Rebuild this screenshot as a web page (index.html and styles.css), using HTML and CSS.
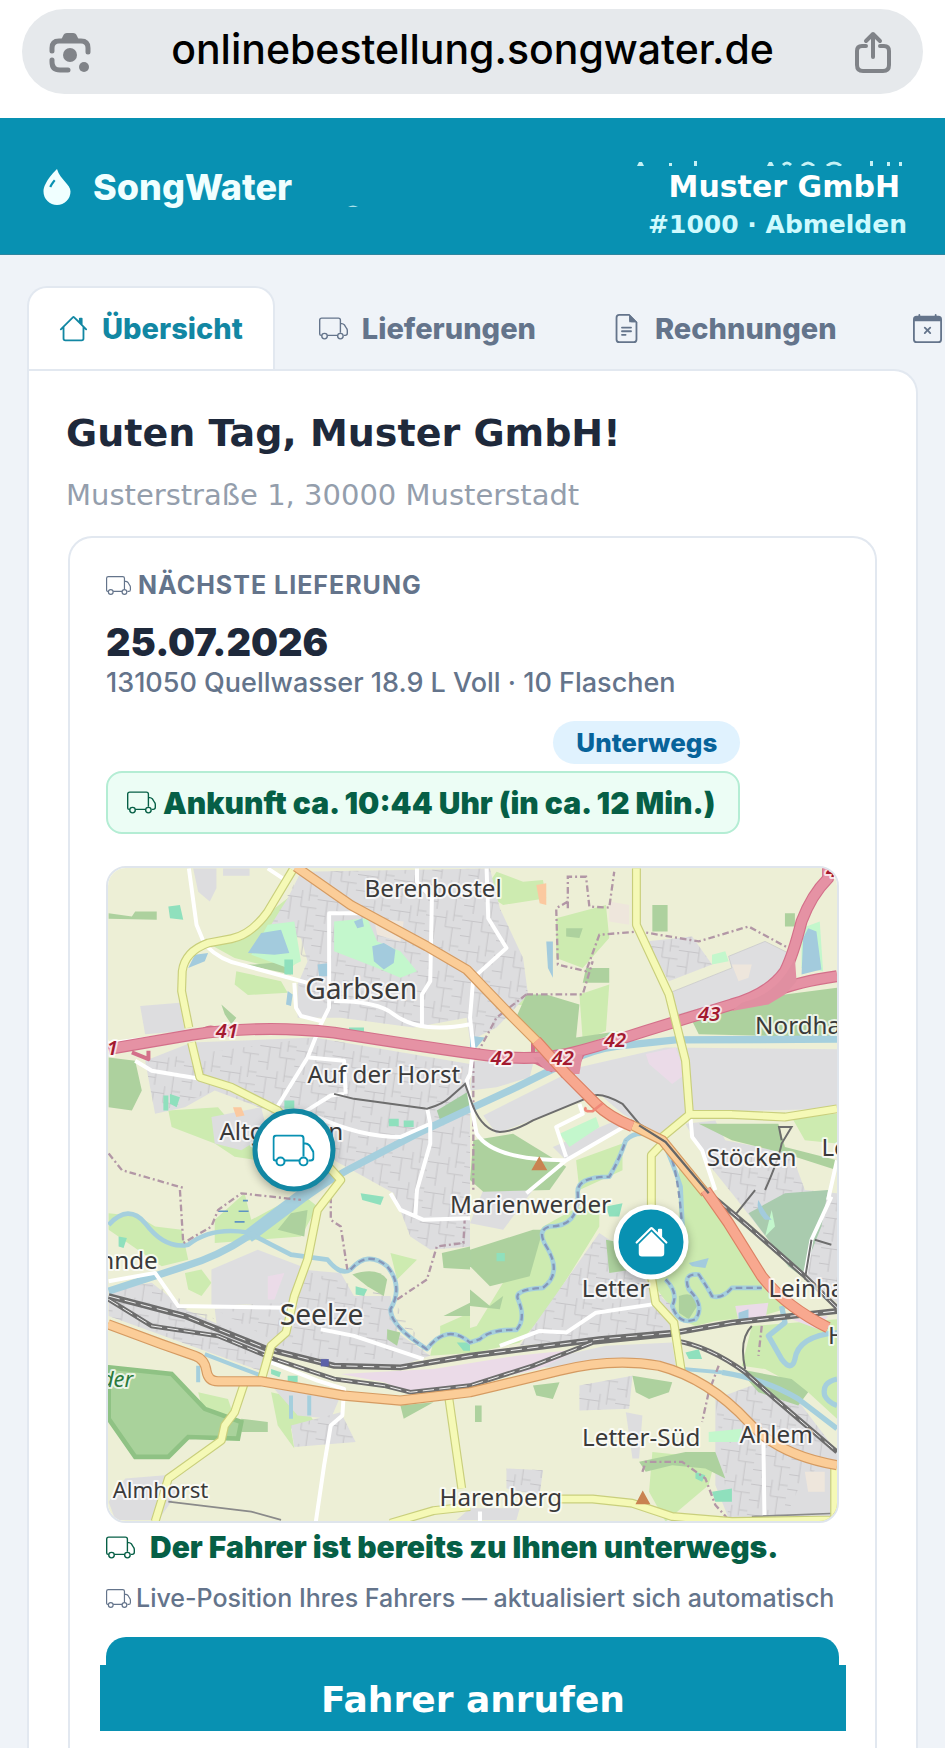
FILE: index.html
```html
<!DOCTYPE html>
<html lang="de">

<head>
    <meta charset="UTF-8">
    <meta name="viewport" content="width=device-width, initial-scale=1">
    <title>SongWater Kundenportal</title>
    <link rel="stylesheet" href="styles.css">
</head>

<body>

    <!-- Shared icon shapes -->
    <svg class="sprite" aria-hidden="true">
        <symbol id="truck" viewBox="0 0 42 32">
            <g fill="none" stroke="currentColor" stroke-width="2" stroke-linejoin="round">
                <path d="M4 26H3a2 2 0 0 1-2-2V4a3 3 0 0 1 3-3h24a3 3 0 0 1 3 3v18M12 26h15" />
                <path d="M31 9h2c2 0 3 1 4 2l3 5c1 1 1 2 1 3v4a3 3 0 0 1-3 3h-2" />
                <circle cx="8" cy="27" r="4" />
                <circle cx="31" cy="27" r="4" />
            </g>
        </symbol>
        <symbol id="house" viewBox="0 0 16 16">
            <path fill="currentColor" d="M8.707 1.5a1 1 0 0 0-1.414 0L.646 8.146a.5.5 0 0 0 .708.708L2 8.207V13.5A1.5 1.5 0 0 0 3.5 15h9a1.5 1.5 0 0 0 1.5-1.5V8.207l.646.647a.5.5 0 0 0 .708-.708L13 5.793V2.5a.5.5 0 0 0-.5-.5h-1a.5.5 0 0 0-.5.5v1.293zM13 7.207V13.5a.5.5 0 0 1-.5.5h-9a.5.5 0 0 1-.5-.5V7.207l5-5z" />
        </symbol>
    </svg>

    <!-- Address bar -->
    <div class="browser-bar">
        <div class="address">
            <button class="bar-btn" type="button" aria-label="Bildsuche">
                <svg viewBox="0 0 42 42" width="42" height="42">
                    <g fill="none" stroke="#808388" stroke-width="5" stroke-linecap="round">
                        <path d="M3 20v-3q0-7 7-7h22q7 0 7 7v4" />
                        <path d="M3 29v2q0 8 8 8h8" />
                    </g>
                    <path fill="#808388" d="M11 11l3-6q1-3 4-3h6q3 0 4 3l3 6z" />
                    <circle cx="21" cy="24" r="7" fill="#808388" />
                    <circle cx="35" cy="36" r="5" fill="#808388" />
                </svg>
            </button>
            <input class="url" type="text" value="onlinebestellung.songwater.de" aria-label="Adresse" readonly>
            <button class="bar-btn" type="button" aria-label="Teilen">
                <svg viewBox="0 0 42 42" width="42" height="42">
                    <g fill="none" stroke="#808388" stroke-width="4" stroke-linecap="round" stroke-linejoin="round">
                        <path d="M12 15H8q-5 0-5 5v14q0 6 6 6h20q6 0 6-6V20q0-5-5-5h-4" />
                        <path d="M19 26V3M12 10l7-7 7 7" />
                    </g>
                </svg>
            </button>
        </div>
    </div>

    <!-- Header -->
    <header class="header">
        <div class="brand">
            <svg viewBox="0 0 16 16" width="36" height="36">
                <path fill="#f0ffff" fill-rule="evenodd" d="M8 16a6 6 0 0 0 6-6c0-1.655-1.122-2.904-2.432-4.362C10.254 4.176 8.75 2.503 8 0c0 0-6 5.686-6 10a6 6 0 0 0 6 6M6.646 4.646l.708.708c-.29.29-1.128 1.311-1.907 2.87l-.894-.448c.82-1.641 1.717-2.753 2.093-3.13" />
            </svg>
            <span>SongWater</span>
            <svg class="brand-mark" viewBox="0 0 10 2" width="10" height="2">
                <path d="M0 2q5-3 10 0z" fill="#a8e2ea" />
            </svg>
        </div>
        <div class="account">
            <svg class="account-marks" viewBox="0 0 272 5" width="272" height="5">
                <path fill="#c5f1f5" d="M2 5l2-4h3l2 4zM34 2h3v3h-3zM59 0h3v5h-3zM132 5l2-4h3l2 4zM235 0h3v5h-3zM252 1h3v4h-3zM264 1h3v4h-3z" />
                <path fill="none" stroke="#c5f1f5" stroke-width="3" d="M148 4q4-4 8 0M167 5q6-6 12 0M192 5q7-6 14 0" />
            </svg>
            <span class="account-name">Muster GmbH</span>
            <span class="account-sub">#1000 · <a href="#abmelden">Abmelden</a></span>
        </div>
    </header>

    <main class="page">
        <!-- Tabs -->
        <nav class="tabs">
            <a class="tab active" href="#uebersicht">
                <svg class="icon"><use href="#house" /></svg>
                Übersicht
            </a>
            <a class="tab" href="#lieferungen">
                <svg class="icon"><use href="#truck" /></svg>
                Lieferungen
            </a>
            <a class="tab" href="#rechnungen">
                <svg class="icon" viewBox="0 0 16 16" fill="currentColor">
                    <path d="M5.500 7a.5.5 0 0 0 0 1h5a.5.5 0 0 0 0-1zM5 9.500a.5.5 0 0 1 .5-.5h5a.5.5 0 0 1 0 1h-5a.5.5 0 0 1-.5-.5m0 2a.5.5 0 0 1 .5-.5h2a.5.5 0 0 1 0 1h-2a.5.5 0 0 1-.5-.5" />
                    <path d="M9.500 0H4a2 2 0 0 0-2 2v12a2 2 0 0 0 2 2h8a2 2 0 0 0 2-2V4.500zm0 1v2A1.500 1.500 0 0 0 11 4.500h2V14a1 1 0 0 1-1 1H4a1 1 0 0 1-1-1V2a1 1 0 0 1 1-1z" />
                    <path d="M9.500 0v4.500H14z" />
                </svg>
                Rechnungen
            </a>
            <a class="tab" href="#pausen" aria-label="Lieferpausen">
                <svg class="icon" viewBox="0 0 16 16" fill="currentColor">
                    <path d="M4 .5a.5.5 0 0 0-1 0V1H2a2 2 0 0 0-2 2v11a2 2 0 0 0 2 2h12a2 2 0 0 0 2-2V3a2 2 0 0 0-2-2h-1V.5a.5.5 0 0 0-1 0V1H4zM1 14V4h14v10a1 1 0 0 1-1 1H2a1 1 0 0 1-1-1" />
                    <path d="M6.146 7.146a.5.5 0 0 1 .708 0L8 8.293l1.146-1.147a.5.5 0 1 1 .708.708L8.707 9l1.147 1.146a.5.5 0 0 1-.708.708L8 9.707l-1.146 1.147a.5.5 0 0 1-.708-.708L7.293 9 6.146 7.854a.5.5 0 0 1 0-.708" />
                </svg>
            </a>
        </nav>

        <section class="panel">
            <h1>Guten Tag, Muster GmbH!</h1>
            <p class="street">Musterstraße 1, 30000 Musterstadt</p>

            <div class="card">
                <h2 class="card-label">
                    <svg class="icon small"><use href="#truck" /></svg>
                    NÄCHSTE LIEFERUNG
                </h2>
                <div class="date">25.07.2026</div>
                <div class="product">131050 Quellwasser 18.9 L Voll · 10 Flaschen</div>

                <div class="status">
                    <span class="badge">Unterwegs</span>
                    <div class="eta">
                        <svg class="icon"><use href="#truck" /></svg>
                        Ankunft ca. 10:44 Uhr (in ca. 12 Min.)
                    </div>
                </div>

                <!-- Live map -->
                <div class="map">
                    <svg class="map-svg" viewBox="18 18 2199 1971" preserveAspectRatio="xMidYMid slice" role="img" aria-label="Karte">
                        <defs>
                            <pattern id="streets" width="110" height="92" patternUnits="userSpaceOnUse" patternTransform="rotate(8)">
                                <path d="M0 22H62M62 0V50M30 22V92M62 50H110M84 50V92M0 70H30M84 12H110M84 0V30" fill="none" stroke="#c6c5c8" stroke-width="3" />
                            </pattern>
                        </defs>
                        <rect x="0" y="0" width="2240" height="2010" fill="#edefd6" />

                        <!-- meadows -->
                        <g fill="#cdebb0">
                            <path d="M310 240L430 210 560 110 620 60 560 190 590 300 560 330 400 290z" />
                            <path d="M405 330L540 360 560 395 440 402 400 370z" />
                            <path d="M200 750L350 740 400 800 500 850 470 900 400 890 340 850 210 800z" />
                            <path d="M340 1080L430 1000 450 1080 600 1000 650 1040 600 1130 340 1150z" />
                            <path d="M20 1060L110 1070 160 1100 240 1110 260 1200 180 1220 20 1110z" />
                            <path d="M250 1240L300 1230 330 1270 300 1310 260 1290z" />
                            <path d="M1190 30L1270 60 1330 55 1340 110 1210 130 1150 90zM1370 170L1520 130 1530 230 1450 320 1370 290z" />
                            <path d="M1440 400L1530 370 1520 510 1450 540z" />
                            <path d="M1430 900L1570 850 1570 930 1440 990z" />
                            <path d="M1000 1440L1130 1400 1240 1220 1330 1100 1420 1050 1500 1020 1500 1100 1420 1230 1330 1370 1260 1450 1130 1480 990 1490z" />
                            <path d="M1740 880L1830 1010 1960 1200 2010 1270 2090 1340 1990 1370 1850 1385 1790 1400 1740 1380 1660 1270 1740 1200z" />
                            <path d="M1960 1400L2217 1380 2217 1680 2130 1600 2000 1530 1930 1520z" />
                            <path d="M1820 1400L1930 1390 1930 1500 1850 1480z" fill="#edefd6" />
                            <path d="M870 1180L950 1200 890 1260zM1020 1400L1110 1360 1110 1460 1020 1440z" />
                            <path d="M510 1600L600 1620 640 1690 570 1710 580 1770 530 1700z" />
                            <path d="M290 1600L380 1620 400 1680 300 1640z" />
                            <path d="M1230 400L1360 410 1330 440 1250 430zM2080 770L2217 760 2217 850 2120 840z" />
                            <path d="M1660 1780L1850 1800 1830 1880 1700 1990 1650 1900z" />
                        </g>

                        <!-- built-up areas -->
                        <g fill="#dddddf">
                            <path d="M275 20H345V80L325 120 290 90zM365 20H445V42H365z" />
                            <path d="M115 435L235 425 250 510 130 520z" />
                            <path d="M600 30L1170 20 1200 140 1270 290 1285 400 1190 500 1110 540 1100 470 940 500 720 470 590 470 590 370 620 300 600 230 510 190 560 110z" />
                            <path d="M130 600L270 545 640 530 1110 610 1110 1160 990 1170 930 1130 880 1000 700 900 500 750 340 690 250 740 160 760z" />
                            <path d="M330 770L480 740 500 820 420 870 340 850z" />
                            <path d="M1640 240L1780 225 1840 310 1710 360z" />
                            <path d="M1120 600L1300 610 1290 650 1190 680 1110 690z" />
                            <path d="M1760 790L1850 780 1880 840 2080 880 2120 990 2217 1000 2217 1330 2140 1270 2010 1140 1900 1000 1820 900z" />
                            <path d="M1360 860L1550 780 1570 800 1400 900z" />
                            <path d="M1150 990H1300L1210 1110 1110 1090z" />
                            <path d="M1260 1460L1380 1290 1500 1120 1560 1160 1660 1290 1730 1350 1730 1420z" />
                            <path d="M20 1290L150 1270 250 1350 340 1390 500 1470 490 1540 20 1370z" />
                            <path d="M340 1350L560 1320 600 1230 720 1240 760 1310 870 1310 890 1420 990 1490 900 1520 640 1510 350 1430z" />
                            <path d="M20 1930L70 1860 190 1850 230 1900 170 1985 40 1985z" />
                            <path d="M570 1700L720 1660 765 1750 580 1765zM520 1590L720 1610 690 1680 590 1670z" />
                            <path d="M1440 1580L1600 1550 1590 1650 1440 1655zM1580 1660L1630 1670 1620 1800 1600 1800z" />
                            <path d="M1850 1620L1960 1580 2080 1600 2217 1780 2217 1980 1890 1980 1850 1880z" />
                            <path d="M1220 1830L1330 1835 1320 1910 1220 1890zM1110 1950L1260 1950 1250 1985 1070 1985z" />
                        </g>
                        <g fill="url(#streets)">
                            <path d="M600 30L1170 20 1200 140 1270 290 1285 400 1190 500 1110 540 1100 470 940 500 720 470 590 370 620 300 510 190z" />
                            <path d="M130 600L640 530 1110 610 1110 1160 990 1170 930 1130 880 1000 700 900 500 750 340 690 160 760z" />
                            <path d="M1640 240L1780 225 1840 310 1710 360zM1820 900L2080 880 2120 990 2217 1000 2217 1330 1900 1000z" />
                            <path d="M1260 1460L1500 1120 1730 1350 1730 1420zM340 1350L600 1230 870 1310 990 1490 640 1510zM20 1290L150 1270 500 1470 490 1540 20 1370z" />
                            <path d="M1850 1620L1960 1580 2080 1600 2217 1780 2110 1870 2060 1980H1890zM570 1700L720 1660 765 1750 580 1765z" />
                            <path d="M1440 1580L1600 1550 1590 1650 1440 1655zM1220 1830L1330 1835 1320 1910 1220 1890z" />
                        </g>
                        <g fill="#dedee0">
                            <path d="M1700 400L1900 320 1890 285 2000 240 2080 280 2050 340 1960 400 1740 460z" stroke="#c4c4c8" stroke-width="2" />
                            <path d="M1150 765L1440 620 1700 560 2217 565V745L1770 755 1690 830 1570 760 1500 700 1190 820z" />
                            <path d="M330 1230L470 1170 600 1220 560 1330 330 1340z" />
                            <path d="M1250 1520L1520 1460 1720 1450 1730 1520 1600 1510 1430 1530z" />
                        </g>
                        <path d="M1640 580L1730 560 1760 640 1720 670 1650 610zM500 1250L550 1240 520 1320H500zM1910 1340L2010 1330 2000 1385 1920 1385zM2080 1380L2190 1370 2160 1410z" fill="#ebdbe8" />
                        <path d="M720 1545L1000 1530 1250 1490 1440 1470 1320 1530 1110 1575 930 1600 850 1570z" fill="#ebdbe8" />
                        <path d="M820 170L910 180 900 240 830 220zM1530 120L1590 130 1590 190 1530 180zM1300 465L1350 460 1400 500 1390 540 1330 530zM1900 310L1960 310 1950 350 1920 360zM2120 1840H2180V1900H2130z" fill="#eee6dc" />

                        <!-- woods -->
                        <g fill="#add19e">
                            <path d="M20 590L100 600 120 690 90 750 20 740zM20 155L90 165 100 150 165 150 165 175 20 172z" />
                            <path d="M460 310L560 300 570 340 430 310zM360 430L405 470 390 490 370 460z" />
                            <path d="M1280 400L1340 400 1440 430 1430 530 1560 510 1440 560 1360 585 1300 570 1300 510 1240 490z" />
                            <path d="M1460 320L1530 320V365H1450zM2060 155H2090V195H2060zM1400 200L1450 200 1440 230 1400 225z" />
                            <path d="M1660 130H1706V210H1660z" />
                            <path d="M1780 480L2060 400 2217 380V530L1800 520z" />
                            <path d="M1120 840L1240 820 1370 900 1400 920 1350 990 1150 995 1110 960z" />
                            <path d="M1290 1250L1170 1280 1110 1220 1110 1170 1300 1110 1330 1110z" />
                            <path d="M1800 790L2040 790 2060 860 2217 900 2217 930 2060 880 1900 840z" />
                            <path d="M1950 1060L2060 1000 2190 990 2170 1100 2110 1250 2070 1220z" fill="#a9cbae" />
                            <path d="M1010 750L1110 690 1110 740 1020 780z" fill="#a2cba0" />
                            <path d="M570 1060L620 1050 610 1130 530 1110zM1025 1180L1110 1160V1230L1030 1225zM1030 1370L1110 1330V1370z" />
                            <path d="M755 1245Q830 1220 860 1260L850 1310 800 1280z" />
                            <path d="M1740 1310Q1790 1290 1795 1340L1770 1380 1740 1360z" />
                            <path d="M1300 1580L1380 1570 1360 1620 1310 1610zM1600 1550L1720 1570 1710 1600 1650 1620 1610 1600zM1125 1640H1145V1690H1125z" />
                            <path d="M1520 1140L1570 1150 1600 1230 1530 1240zM860 1410L900 1420 890 1460 860 1440z" />
                            <path d="M420 1680L500 1690 500 1720 420 1720zM900 1640L1000 1630 910 1680zM1620 1810L1760 1780 1850 1780 1880 1860 1820 1830 1720 1820 1640 1840z" />
                            <path d="M1110 1290L1170 1340 1210 1310 1200 1350 1110 1340zM1920 1530L2080 1560 2130 1600 2100 1640 1980 1600z" />
                        </g>
                        <path d="M20 1525L210 1545 310 1650 420 1690 410 1740 260 1735 200 1795 100 1795 20 1680z" fill="#a9d29b" stroke="#8fc284" stroke-width="14" />

                        <!-- parks and pitches -->
                        <g fill="#c3f7cc">
                            <path d="M500 190L580 180 600 300 560 320 450 280z" />
                            <path d="M700 180L800 170 830 240 900 270 950 330 900 350 830 320 700 270z" />
                            <path d="M1380 820L1490 770 1500 800 1410 860zM1840 280L1880 270 1890 300 1840 310zM1830 1720L1930 1710 1920 1750 1830 1750z" />
                            <path d="M2110 200L2165 180 2175 330 2110 320z" />
                            <path d="M2000 1130L2030 1100 2020 1050z" />
                        </g>
                        <g fill="#8fe0bd">
                            <path d="M200 135L235 130 245 175 205 170zM550 295H576V340H550zM185 705H200V750H185zM205 700L235 710 225 740 205 730zM550 720H580V745H550zM865 775H895V798H865zM910 780H940V800H910zM745 500H790V515H745z" />
                            <path d="M780 1000L850 1010 840 1035 785 1020zM50 1130L75 1135 65 1165 50 1160zM765 1280L800 1290 790 1310 765 1305zM510 1530L540 1540 535 1555 510 1545zM560 1550H590V1570H560z" />
                            <path d="M1520 1040L1570 1030 1560 1070 1530 1070zM1190 1180H1215V1205H1190zM1760 1480L1800 1470 1810 1500 1770 1500zM1840 1900L1900 1890V1930L1850 1930zM1790 1840L1820 1850 1810 1870 1790 1860zM1070 1450L1110 1450V1475H1090z" />
                        </g>
                        <g fill="#fbc9a0">
                            <path d="M395 740L420 740 430 765 405 770zM1310 70L1340 65V130L1320 125z" />
                        </g>

                        <!-- lakes -->
                        <g fill="#a3cbdd">
                            <path d="M440 275L480 215 540 205 565 275 520 280zM815 255L850 245 885 265 880 305 850 325 820 300zM650 310L685 305 685 345 655 345zM260 320L280 280 320 275 310 300z" />
                            <path d="M2115 230L2130 200 2155 210 2170 325 2110 340zM560 390L575 400 570 435 555 430zM760 180L785 170 790 195 770 200zM1340 240H1360V350L1345 320zM1110 525L1155 530 1130 560 1110 560z" />
                            <path d="M1980 1020Q2000 1060 2020 1080L2000 1080Q1970 1050 1980 1020zM1770 1210L1830 1195 1820 1225 1780 1220zM1920 1360L1950 1350V1380H1920z" />
                        </g>

                        <!-- rivers and canal -->
                        <g fill="none" stroke="#a5cfdd" stroke-linejoin="round">
                            <path stroke-width="22" d="M20 1295L250 1220Q350 1190 440 1130L600 1010 740 930 950 820 1110 745 1250 680 1400 605Q1480 565 1560 555L1730 537 2217 535" />
                            <path stroke-width="40" d="M440 1130L600 1010 700 940" />
                            <path stroke-width="12" d="M310 1485L400 1520 480 1550M1640 1520L1870 1540M570 1610V1680M625 1610V1670M290 1520V1570" />
                            <path stroke-width="16" d="M1870 1540Q2000 1560 2100 1620L2217 1710M2217 1420Q2100 1430 2090 1500Q2080 1540 2050 1500L2010 1430 2060 1390 2050 1340M2217 1560Q2170 1570 2180 1610Q2190 1630 2217 1640" />
                            <path stroke-width="14" d="M20 1095Q80 1030 130 1090Q190 1170 260 1155Q330 1100 440 1118Q500 1150 570 1185L680 1200Q720 1250 750 1230Q800 1170 860 1220Q910 1280 870 1350Q870 1400 980 1470Q1040 1390 1110 1450L1140 1440Q1170 1410 1250 1412Q1280 1380 1255 1320Q1240 1290 1330 1285Q1390 1240 1340 1160Q1310 1110 1350 1100Q1440 1100 1435 1000Q1430 950 1530 950Q1560 900 1580 840Q1620 800 1690 840Q1720 900 1745 980L1755 1180M1700 1260Q1740 1300 1720 1340Q1740 1400 1790 1380Q1820 1340 1770 1290Q1750 1240 1800 1245Q1830 1290 1840 1310Q1870 1320 1900 1285L1990 1285" />
                            <path stroke="#8497b9" stroke-width="7" stroke-dasharray="20 12" d="M750 1230Q800 1170 860 1220Q910 1280 870 1350Q870 1400 980 1470Q1040 1390 1110 1450L1140 1440Q1170 1410 1250 1412Q1280 1380 1255 1320Q1240 1290 1330 1285Q1390 1240 1340 1160Q1310 1110 1350 1100Q1440 1100 1435 1000Q1430 950 1530 950Q1560 900 1580 840M1720 900Q1745 980 1755 1180M1700 1260Q1740 1300 1720 1340Q1740 1400 1790 1380Q1820 1340 1770 1290Q1750 1240 1800 1245Q1830 1290 1840 1310Q1870 1320 1900 1285L1990 1285" />
                            <path stroke="#5e93c4" stroke-width="5" stroke-dasharray="30 16" d="M350 1054H385M412 1054H445M400 1086H430M425 1022H440" />
                        </g>

                        <!-- district borders -->
                        <g fill="none" stroke="#b297a6" stroke-width="7" stroke-dasharray="20 9 6 9">
                            <path d="M1405 140V45H1460L1470 135 1530 138 1545 30M1405 120L1370 140 1375 310 1460 330 1500 220 1620 210 1800 240 1950 195 2070 260M1280 400H1450L1480 300" />
                            <path d="M20 880L60 930 250 985M235 990L245 1150 330 1100 350 1050 420 1000 600 1020M690 1010V1080L720 1100 740 1230M890 1320L980 1260 1010 1160 1090 1150 1095 1060" />
                            <path d="M1860 1520L1830 1600 1810 1690M1630 1840L1640 1810 1750 1810 1820 1860 1850 1940 1895 1990M1280 400L1190 470 1120 600 1120 990M1990 1400L1980 1490" />
                        </g>

                        <!-- white local roads -->
                        <g fill="none" stroke-linejoin="round">
                            <path stroke="#ffffff" stroke-width="12" d="M262 20L285 190 310 250Q360 300 420 310L620 365M580 365L585 440 600 465 660 480M780 155H685V440L660 490 620 590 525 745M500 20L560 60M950 20V60L995 110 990 360 965 400V490M700 420Q830 420 880 460Q960 520 1110 490M1160 20L1165 170 1220 260 1120 350 1110 470 1120 560 1110 640 1100 660 1130 820Q1180 900 1400 900L1590 790M1400 900L1280 1000M20 548L160 530 270 515M100 600L150 630 300 655M625 590L730 600 735 700M610 755L690 705 730 700M650 770Q780 830 900 830L990 790 980 740M990 790L990 850 950 990 945 1070M870 1000L900 1050 970 1080 1110 1075M20 1265L160 1240 230 1340 560 1345M660 1410L760 1430 970 1500M510 1510L650 1565 730 1590 725 1670 690 1700 670 1820 645 1990M1775 770L1780 830 1810 870 1850 990M1200 1460L1320 1415 1400 1420 1490 1360 1660 1335M1995 1740L1998 1970M2200 1010L2140 1140 2120 1250M1400 890L1370 800 1450 760 1440 730M1140 1960V1990M2217 900L2190 1020" />
                        </g>

                        <!-- railways -->
                        <g fill="none" stroke="#6d6d6d">
                            <path stroke-width="6" d="M700 700L760 715 980 745Q1030 730 1050 710L1095 670 1120 740Q1150 810 1200 815Q1240 815 1300 780L1470 710Q1500 690 1570 730L1620 790 1700 840" />
                            <path stroke-width="6" d="M2000 990Q2040 900 2050 850L2080 800H2042L2050 840M1910 1065L1970 990M2150 1140L2200 1155M2140 1140L2120 1260M1960 1400Q1920 1440 1940 1530" />
                            <path stroke-width="5" d="M200 1930L450 1960 540 1985M1960 1975L2217 1965" stroke="#8a8a8a" />
                            <path stroke-width="18" d="M20 1310L250 1370 500 1470 700 1520 900 1525 1110 1490 1500 1440 1730 1420 1900 1390 2217 1355" />
                            <path stroke-width="14" d="M20 1320L150 1400 350 1430 520 1500 700 1560 850 1580 930 1600 1110 1580 1300 1520 1480 1450 1730 1425" />
                            <path stroke-width="15" d="M1730 1445Q1830 1460 1940 1540L2030 1620 2217 1780M1820 990L1950 1100 2120 1250 2217 1345" />
                            <path stroke="#efefef" stroke-width="3" stroke-dasharray="34 16" d="M20 1310L250 1370 500 1470 700 1520 900 1525 1110 1490 1500 1440 1730 1420 1900 1390 2217 1355M20 1320L150 1400 350 1430 520 1500 700 1560 850 1580 930 1600 1110 1580 1300 1520 1480 1450M1730 1445Q1830 1460 1940 1540L2030 1620 2217 1780M1820 990L1950 1100 2120 1250 2217 1345" />
                        </g>
                        <rect x="660" y="1500" width="24" height="22" fill="#5b61a8" />

                        <!-- motorway -->
                        <g fill="none" stroke-linejoin="round">
                            <path stroke="#d3708a" stroke-width="36" d="M20 565L270 522Q480 490 700 515 950 555 1130 580 1280 603 1400 580 1470 565 1640 510L1900 430Q2010 400 2060 330 2085 280 2110 180 2140 100 2190 50V10M2030 390Q2100 362 2217 345" />
                            <path stroke="#d3708a" stroke-width="12" d="M1300 540V600L1360 630M1450 580L1420 640M290 520Q320 490 345 505M90 575L140 595V570" />
                            <path stroke="#e592a4" stroke-width="29" d="M20 565L270 522Q480 490 700 515 950 555 1130 580 1280 603 1400 580 1470 565 1640 510L1900 430Q2010 400 2060 330 2085 280 2110 180 2140 100 2190 50V10M2030 390Q2100 362 2217 345" />
                            <path fill="#e08fa1" d="M1930 425Q2040 400 2090 290L2095 360 2060 400 2010 430 1900 450zM1300 590L1450 580 1440 640H1420L1340 630z" />
                        </g>

                        <!-- yellow roads -->
                        <g fill="none" stroke-linejoin="round">
                            <path stroke="#c9cf7c" stroke-width="27" d="M575 25L500 150Q450 220 390 232L320 245Q250 270 242 330L240 390 262 500M270 545L295 650 390 680 530 750 720 960 650 1050 620 1200 580 1310 555 1420 510 1460 480 1565M430 1570L400 1660 370 1700 360 1745 200 1860 160 1990M1612 20V190L1710 400 1760 600 1772 760M1690 830L1772 762 1900 762 2060 770 2217 745M1700 840L1657 885V1250L1670 1330 1725 1390 1748 1540M1045 1610L1085 1890M870 1995L1000 1957 1110 1945M1380 1922L1480 1922 1600 1935 1720 1975 1900 1990 2210 1985V1820" />
                            <path stroke="#f5f9b6" stroke-width="20" d="M575 25L500 150Q450 220 390 232L320 245Q250 270 242 330L240 390 262 500M270 545L295 650 390 680 530 750 720 960 650 1050 620 1200 580 1310 555 1420 510 1460 480 1565M430 1570L400 1660 370 1700 360 1745 200 1860 160 1990M1612 20V190L1710 400 1760 600 1772 760M1690 830L1772 762 1900 762 2060 770 2217 745M1700 840L1657 885V1250L1670 1330 1725 1390 1748 1540M1045 1610L1085 1890M870 1995L1000 1957 1110 1945M1380 1922L1480 1922 1600 1935 1720 1975 1900 1990 2210 1985V1820" />
                        </g>

                        <!-- main roads -->
                        <g fill="none" stroke-linejoin="round">
                            <path stroke="#d59b62" stroke-width="31" d="M585 15L750 130 980 255 1100 325 1230 460 1320 550M1590 790L1690 840 1820 1000M18 1395L180 1455 280 1490Q310 1500 315 1535 320 1567 350 1567H480L730 1610 900 1625 1110 1600 1380 1535Q1540 1495 1680 1520 1830 1560 1950 1690 2040 1790 2217 1820" />
                            <path stroke="#fbcd98" stroke-width="24" d="M585 15L750 130 980 255 1100 325 1230 460 1320 550M1590 790L1690 840 1820 1000M18 1395L180 1455 280 1490Q310 1500 315 1535 320 1567 350 1567H480L730 1610 900 1625 1110 1600 1380 1535Q1540 1495 1680 1520 1830 1560 1950 1690 2040 1790 2217 1820" />
                            <path stroke="#db8164" stroke-width="35" d="M1310 540L1400 640 1490 730Q1530 770 1600 798M1820 990L1890 1090 1990 1250Q2060 1340 2190 1405" />
                            <path stroke="#f8a88f" stroke-width="28" d="M1310 540L1400 640 1490 730Q1530 770 1600 798M1820 990L1890 1090 1990 1250Q2060 1340 2190 1405" />
                            <path stroke="#f08878" stroke-width="8" d="M1460 740Q1450 755 1480 752L1510 728" />
                            <path stroke="#666" stroke-width="7" d="M1620 795L1700 845 1830 1000" />
                        </g>
                        <path d="M1295 930l24-42 24 42zM1609 1938l22-42 23 42z" fill="#c98351" />

                        <!-- place names -->
                        <g class="places">
                            <text x="792" y="106" class="town">Berenbostel</text>
                            <text x="613" y="414" class="city">Garbsen</text>
                            <text x="620" y="668" class="town">Auf der Horst</text>
                            <text x="354" y="840" class="town">Altgarbsen</text>
                            <text x="1970" y="518" class="town">Nordhafen</text>
                            <text x="1824" y="918" class="town">Stöcken</text>
                            <text x="2170" y="886" class="town">Leinhausen</text>
                            <text x="1050" y="1058" class="town">Marienwerder</text>
                            <text x="168" y="1228" class="town" text-anchor="end">Lohnde</text>
                            <text x="1447" y="1314" class="town">Letter</text>
                            <text x="2010" y="1314" class="town">Leinhausen</text>
                            <text x="536" y="1397" class="city">Seelze</text>
                            <text x="2190" y="1454" class="town">Herrenhausen</text>
                            <text x="1448" y="1762" class="town">Letter-Süd</text>
                            <text x="1924" y="1752" class="town">Ahlem</text>
                            <text x="32" y="1918" class="village">Almhorst</text>
                            <text x="1018" y="1942" class="town">Harenberg</text>
                            <text x="94" y="1584" class="wood" text-anchor="end">der</text>
                            <text x="343" y="532" class="exit">41</text>
                            <text x="48" y="584" class="exit" text-anchor="end">41</text>
                            <text x="1172" y="612" class="exit">42</text>
                            <text x="1356" y="612" class="exit">42</text>
                            <text x="1514" y="560" class="exit">42</text>
                            <text x="1798" y="480" class="exit">43</text>
                            <text x="2184" y="46" class="exit">44</text>
                        </g>
                    </svg>

                    <span class="pin pin-truck"><svg width="42" height="32"><use href="#truck" /></svg></span>
                    <span class="pin pin-home">
                        <svg viewBox="0 0 16 16" width="34" height="34" fill="currentColor">
                            <path d="M8.707 1.500a1 1 0 0 0-1.414 0L.646 8.146a.5.5 0 0 0 .708.708L8 2.207l6.646 6.647a.5.5 0 0 0 .708-.708L13 5.793V2.500a.5.5 0 0 0-.5-.5h-1a.5.5 0 0 0-.5.5v1.293z" />
                            <path d="m8 3.293 6 6V13.500a1.500 1.500 0 0 1-1.500 1.500h-9A1.500 1.500 0 0 1 2 13.500V9.293z" />
                        </svg>
                    </span>
                </div>

                <p class="driver">
                    <svg class="icon"><use href="#truck" /></svg>
                    Der Fahrer ist bereits zu Ihnen unterwegs.
                </p>
                <p class="live">
                    <svg class="icon small"><use href="#truck" /></svg>
                    Live-Position Ihres Fahrers — aktualisiert sich automatisch
                </p>

                <div class="call">
                    <button class="call-btn" type="button">Fahrer anrufen</button>
                </div>
            </div>
        </section>
    </main>

</body>

</html>
```

FILE: styles.css
```css
* {
    box-sizing: border-box;
}

body {
    font-family: Inter, 'Liberation Sans', sans-serif;
    background-color: #eff3f8;
    color: #1e293b;
    margin: 0;
    overflow-x: hidden;
}

svg {
    display: block;
    flex: none;
}

.sprite {
    position: absolute;
    width: 0;
    height: 0;
}

/* Address bar */
.browser-bar {
    background: #fff;
    padding: 9px 22px 24px;
}

.address {
    display: flex;
    align-items: center;
    height: 85px;
    padding: 0 27px;
    border-radius: 43px;
    background: #e6e9ec;
}

.bar-btn {
    padding: 0;
    border: none;
    background: none;
    cursor: pointer;
}

.url {
    flex: 1;
    min-width: 0;
    padding: 0 0 6px;
    border: none;
    outline: none;
    background: none;
    text-align: center;
    font-family: inherit;
    font-size: 41px;
    font-weight: 500;
    color: #000;
}

/* Header */
.header {
    display: flex;
    justify-content: space-between;
    height: 137px;
    padding: 43px 38px 0 39px;
    background: #0891b2;
    border-bottom: 1px solid #2d86a0;
}

.brand {
    display: flex;
    align-items: center;
    gap: 18px;
    height: 52px;
    font-size: 36px;
    font-weight: 800;
    color: #f0ffff;
}

.brand-mark {
    align-self: flex-end;
    margin: 0 0 6px 38px;
}

.account {
    display: flex;
    flex-direction: column;
    align-items: flex-end;
    font-family: 'DejaVu Sans', sans-serif;
    font-weight: 700;
}

.account-name {
    padding-right: 7px;
    font-size: 30px;
    line-height: 42px;
    color: #fff;
}

.account-sub {
    font-size: 25px;
    line-height: 34px;
    color: #cffafe;
}

.account-sub a {
    color: inherit;
    text-decoration: none;
}

/* Tabs */
.page {
    padding: 31px 27px 0;
}

.tabs {
    display: flex;
    gap: 12px;
    margin-right: -27px;
    overflow: hidden;
}

.tab {
    display: flex;
    flex: none;
    align-items: center;
    gap: 14px;
    height: 83px;
    padding: 0 30px;
    border: 2px solid transparent;
    border-bottom: none;
    border-radius: 20px 20px 0 0;
    font-size: 29px;
    font-weight: 800;
    color: #64748b;
    text-decoration: none;
}

.tab.active {
    background: #fff;
    border-color: #e2e8f0;
    color: #1287a3;
}

.icon {
    width: 29px;
    height: 29px;
}

.icon.small {
    width: 25px;
    height: 25px;
}

/* Content panel */
.panel {
    padding: 38px 38px 0 37px;
    border: 2px solid #e2e8f0;
    border-bottom: none;
    border-radius: 0 24px 0 0;
    background: #fff;
}

h1 {
    margin: 0;
    font-family: 'DejaVu Sans', sans-serif;
    font-size: 38px;
    line-height: 48px;
    color: #1e293b;
}

.street {
    margin: 20px 0 23px;
    font-family: 'DejaVu Sans', sans-serif;
    font-size: 29px;
    line-height: 36px;
    color: #949eac;
}

.card {
    margin: 0 1px 0 2px;
    padding: 31px 36px 17px 36px;
    border: 2px solid #e2e8f0;
    border-bottom: none;
    border-radius: 24px 24px 0 0;
}

.card-label {
    display: flex;
    align-items: center;
    gap: 7px;
    margin: 0;
    font-size: 25px;
    line-height: 32px;
    font-weight: 700;
    letter-spacing: 1px;
    color: #64748b;
}

.date {
    margin-top: 18px;
    font-size: 38px;
    line-height: 46px;
    font-weight: 900;
}

.product {
    font-size: 27px;
    line-height: 36px;
    font-weight: 500;
    color: #64748b;
}

.status {
    display: inline-flex;
    flex-direction: column;
    align-items: flex-end;
    gap: 7px;
    margin: 20px 0 32px;
}

.badge {
    padding: 0 23px;
    border-radius: 22px;
    background: #e0f2fe;
    font-size: 26px;
    line-height: 43px;
    font-weight: 800;
    color: #07639a;
}

.eta {
    display: flex;
    align-items: center;
    gap: 7px;
    height: 63px;
    padding: 0 23px 0 19px;
    border: 2px solid #b4edd4;
    border-radius: 16px;
    background: #ecfdf5;
    font-size: 30px;
    font-weight: 900;
    color: #065f46;
}

/* Map */
.map {
    position: relative;
    aspect-ratio: 733 / 657;
    border: 2px solid #dfe5ec;
    border-radius: 20px;
    overflow: hidden;
}

.map-svg {
    width: 100%;
    height: 100%;
}

.places {
    font-family: 'Noto Sans', sans-serif;
    fill: #3a3a3a;
    stroke: rgba(255, 255, 255, 0.75);
    stroke-width: 12px;
    stroke-linejoin: round;
    paint-order: stroke;
}

.places .town {
    font-size: 73px;
}

.places .village {
    font-size: 67px;
}

.places .city {
    font-size: 85px;
}

.places .wood {
    font-size: 66px;
    font-style: italic;
    fill: #2c7a3c;
}

.places .exit {
    font-size: 61px;
    font-style: italic;
    font-weight: 600;
    fill: #a3192f;
}

.pin {
    position: absolute;
    display: flex;
    align-items: center;
    justify-content: center;
    border-radius: 50%;
    transform: translate(-50%, -50%);
    box-shadow: 0 3px 10px rgba(0, 0, 0, 0.3);
}

.pin-truck {
    left: 25.5%;
    top: 43.2%;
    width: 83px;
    height: 83px;
    border: 5px solid #1287a3;
    background: #fff;
    color: #0891b2;
}

.pin-home {
    left: 74.5%;
    top: 57.2%;
    width: 75px;
    height: 75px;
    border: 5px solid #fff;
    background: #0891b2;
    color: #fff;
}

.driver {
    display: flex;
    align-items: center;
    gap: 15px;
    margin: 6px 0 16px;
    font-size: 30px;
    line-height: 36px;
    font-weight: 900;
    color: #065f46;
    white-space: nowrap;
}

.live {
    display: flex;
    align-items: center;
    gap: 5px;
    margin: 0 0 22px;
    font-size: 25px;
    line-height: 34px;
    font-weight: 500;
    color: #64748b;
    white-space: nowrap;
}

/* Call button */
.call {
    margin: 0 -7px 0 -6px;
}

.call::before {
    content: "";
    display: block;
    height: 28px;
    margin: 0 7px 0 6px;
    border-radius: 20px 20px 0 0;
    background: #0891b2;
}

.call-btn {
    display: block;
    width: 100%;
    height: 66px;
    padding: 2px 0 0;
    border: none;
    background: #0891b2;
    font-family: 'DejaVu Sans', sans-serif;
    font-size: 36px;
    font-weight: 700;
    color: #fff;
    cursor: pointer;
}
```
